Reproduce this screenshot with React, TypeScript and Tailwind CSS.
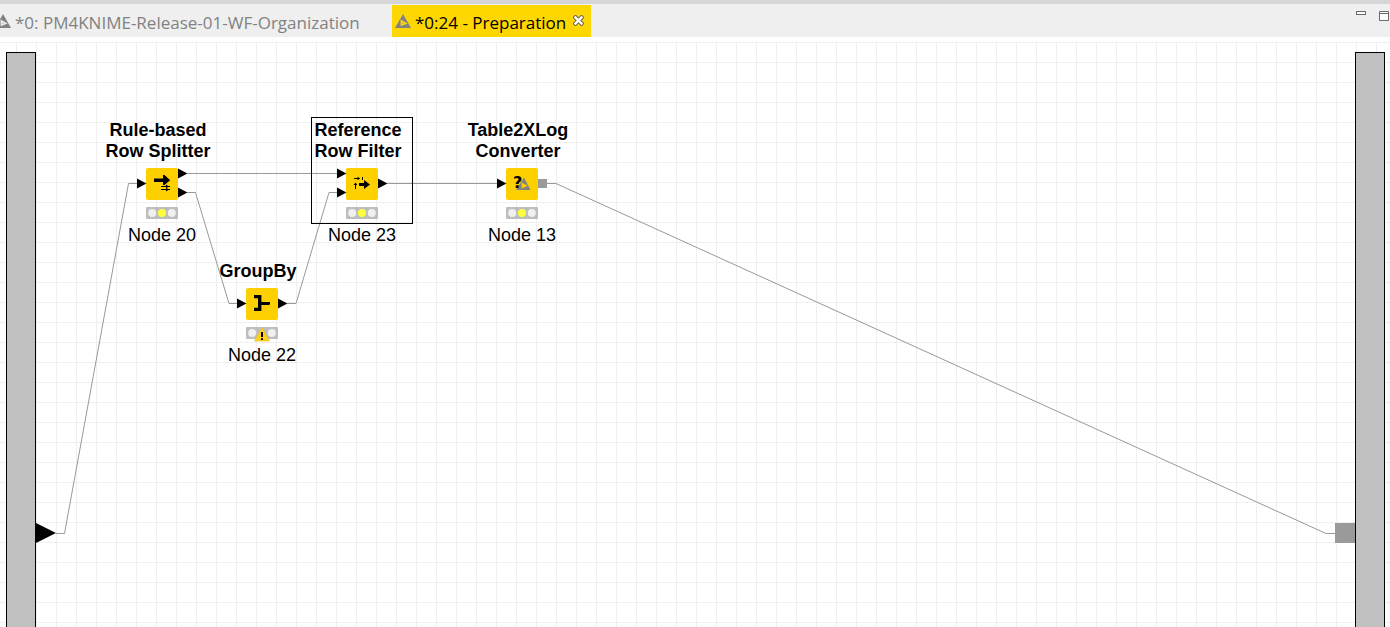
import type { ReactNode } from "react";

const GRID =
  "bg-[linear-gradient(to_right,#efefef_1px,transparent_1px),linear-gradient(to_bottom,#efefef_1px,transparent_1px)] bg-[length:20px_20px] bg-[position:16px_0px]";

function Logo({ hole }: { hole: string }) {
  return (
    <svg width="16" height="14" viewBox="0 0 16 14" className="mb-1 shrink-0" aria-hidden="true">
      <path d="M8 0 L16 14 H0 Z" fill="#828282" />
      <path d="M5.4 5.6 L12.6 9.4 L5.8 12.2 Z" fill={hole} />
      <path d="M6.8 8.2 L9.6 9.4 L7 10.6 Z" fill="#828282" opacity="0.35" />
    </svg>
  );
}

function TabBar() {
  return (
    <header className="flex h-[37px] justify-between overflow-hidden border-t-4 border-[#d6d6d6] bg-[#efefef] font-['Open_Sans','Noto_Sans',sans-serif] text-[17px]">
      <nav className="-ml-2 flex pt-px">
        <button className="flex w-[400px] items-center gap-1 pt-[3px] pl-[3px] whitespace-nowrap text-[#828282]">
          <Logo hole="#efefef" />
          <span>*0: PM4KNIME-Release-01-WF-Organization</span>
        </button>
        <div className="flex items-center gap-[7px] bg-[#ffd700] pt-[3px] pr-[7px] pl-[3px] text-black">
          <button className="flex items-center gap-1 whitespace-nowrap">
            <Logo hole="#ffd700" />
            <span>*0:24 - Preparation</span>
          </button>
          <button aria-label="Close tab" className="mb-1 flex">
            <svg width="11" height="11" viewBox="0 0 11 11">
              <path d="M2.5 2.5 L8.5 8.5 M8.5 2.5 L2.5 8.5" stroke="#6b6546" strokeWidth="4.4" strokeLinecap="square" />
              <path d="M2.5 2.5 L8.5 8.5 M8.5 2.5 L2.5 8.5" stroke="#fff" strokeWidth="2.4" strokeLinecap="square" />
            </svg>
          </button>
        </div>
      </nav>
      <div className="flex items-start gap-[13px] pt-[7px] pr-px">
        <button aria-label="Minimize">
          <svg width="10" height="10" viewBox="0 0 10 10" className="block">
            <rect x="0.5" y="0.5" width="9" height="3" fill="#fff" stroke="#6a6a6a" />
          </svg>
        </button>
        <button aria-label="Maximize">
          <svg width="10" height="10" viewBox="0 0 10 10" className="block">
            <path d="M0.5 0.5 H9.5 V9.5 H0.5 Z M0.5 2.5 H9.5" fill="#fff" stroke="#6a6a6a" />
          </svg>
        </button>
      </div>
    </header>
  );
}

const splitterIcon = (
  <g>
    <path d="M8 10.5 H17 V7 H18.5 L24.2 12.2 L18.5 17 H17 V14 H8 Z" />
    <path d="M15 18.5 H24 M15 21.5 H24" stroke="#000" fill="none" />
    <path d="M20 16.6 L23 18.5 L20 20.2 Z M20 19.8 L23 21.5 L20 23.4 Z" />
  </g>
);

const filterIcon = (
  <g>
    <path d="M13 15 H18 V12 L24 16.5 L18 21 V18 H13 Z" />
    <path d="M8 10.5 H12 M9.5 16 V21 M16.5 9 V12" stroke="#000" fill="none" />
    <path d="M11.5 8.7 L14.2 10.5 L11.5 12.3 Z M7.6 17 L9.5 14.6 L11.4 17 Z" />
  </g>
);

const groupIcon = <path d="M8 7 H15.4 V14 H24 V15.2 L23.4 17 H15.4 V23 H8 V19.8 H12 V10.2 H8 Z" />;

const questionIcon = (
  <g>
    <path d="M18 9.5 L24.5 22 H10 Z" fill="#828282" />
    <path d="M15.5 14.6 L21.5 17.8 L15.8 20.6 Z" fill="#ffd000" />
    <text x="7" y="20" className="font-['DejaVu_Sans',sans-serif] text-[16px] font-bold">
      ?
    </text>
  </g>
);

type WorkflowNode = {
  id: string;
  title: string[];
  place: string;
  icon: ReactNode;
  inputs: number[];
  outputs: number[];
  objectOutput?: boolean;
  warning?: boolean;
};

const nodes: WorkflowNode[] = [
  { id: "Node 20", title: ["Rule-based", "Row Splitter"], place: "left-[102px] top-[78px]", icon: splitterIcon, inputs: [15], outputs: [5, 24] },
  { id: "Node 23", title: ["Reference", "Row Filter"], place: "left-[302px] top-[78px]", icon: filterIcon, inputs: [5, 24], outputs: [15] },
  { id: "Node 13", title: ["Table2XLog", "Converter"], place: "left-[462px] top-[78px]", icon: questionIcon, inputs: [15], outputs: [15], objectOutput: true },
  { id: "Node 22", title: ["GroupBy"], place: "left-[202px] top-[219px]", icon: groupIcon, inputs: [15], outputs: [15], warning: true },
];

function NodeView({ node }: { node: WorkflowNode }) {
  return (
    <section className={`absolute flex w-[120px] flex-col items-center text-[18px] leading-[21px] whitespace-nowrap text-black ${node.place}`}>
      <h2 className="pr-2 text-center font-bold">
        {node.title.map((line) => (
          <span key={line} className="block">
            {line}
          </span>
        ))}
      </h2>
      <svg width="50" height="32" viewBox="-9 0 50 32" className="mt-[6px]" aria-hidden="true">
        <rect width="32" height="32" rx="2" fill="#ffd000" />
        {node.icon}
        {node.inputs.map((y) => (
          <path key={y} d={`M-9 ${y - 4.5} L0.5 ${y + 0.5} L-9 ${y + 5.5} Z`} />
        ))}
        {node.outputs.map((y) =>
          node.objectOutput ? (
            <rect key={y} x="32" y={y - 4} width="9" height="9" fill="#9a9a9a" />
          ) : (
            <path key={y} d={`M32 ${y - 4.5} L41.5 ${y + 0.5} L32 ${y + 5.5} Z`} />
          ),
        )}
      </svg>
      <svg width="32" height="15" viewBox="0 0 32 15" className="mt-[7px]" aria-hidden="true">
        <rect width="32" height="12" rx="1" fill="#bebebe" />
        <circle cx="6.2" cy="6" r="4" fill="#f0f0f0" />
        <circle cx="25.8" cy="6" r="4" fill="#f0f0f0" />
        {node.warning ? (
          <>
            <path d="M16 0.5 L23.5 14 H8.5 Z" fill="#ffd21c" stroke="#e8bd20" strokeWidth="0.6" />
            <path d="M15 5 H17 V10 H15 Z M15 11.2 H17 V13 H15 Z" />
          </>
        ) : (
          <circle cx="16" cy="6" r="4" fill="#ffff37" />
        )}
      </svg>
      <p className="mt-[3px]">{node.id}</p>
    </section>
  );
}

function Canvas() {
  return (
    <main className={`relative mt-[5px] flex flex-1 justify-between overflow-hidden pt-[10px] pr-[5px] pl-[6px] ${GRID}`}>
      <div className="-mb-px w-[30px] border border-black bg-[#c0c0c0]" />
      <div className="-mb-px w-[30px] border border-black bg-[#c0c0c0]" />

      <div className="absolute inset-y-0 right-[64px] left-0">
        <svg width="100%" height="100%" fill="none" stroke="#999" aria-hidden="true">
          <path d="M56 491.5 H64.5 L128.5 141.5 H137" />
          <path d="M187 131.5 H337" />
          <path d="M187 150.5 H195.5 L229 261.5 H237" />
          <path d="M287 261.5 H296 L329 150.5 H337" />
          <path d="M387 141.5 H497" />
          <path d="M547 141.5 H556" />
          <line x1="556" y1="141.5" x2="100%" y2="491.5" />
          <path d="M36 481 L56 491 L36 501 Z" fill="#000" stroke="none" />
        </svg>
      </div>
      <div className="absolute top-[481px] right-[35px] flex items-center">
        <span className="h-px w-[9px] bg-[#999]" />
        <span className="size-5 bg-[#9a9a9a]" />
      </div>

      {nodes.map((node) => (
        <NodeView key={node.id} node={node} />
      ))}
      <div className="absolute top-[75px] left-[311px] h-[107px] w-[102px] border border-black" />
    </main>
  );
}

export default function App() {
  return (
    <div className="flex min-h-screen flex-col bg-white font-['Liberation_Sans',Arial,sans-serif]">
      <TabBar />
      <Canvas />
    </div>
  );
}
